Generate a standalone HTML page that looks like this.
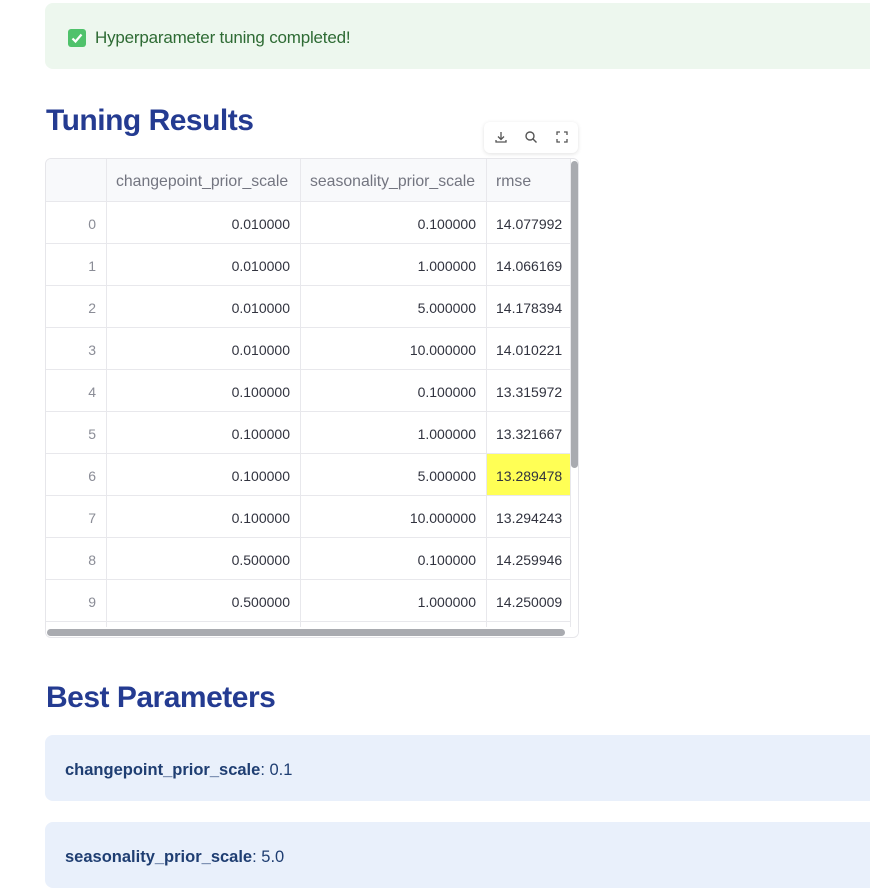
<!DOCTYPE html>
<html><head><meta charset="utf-8"><style>
*{box-sizing:border-box;margin:0;padding:0}
body{width:870px;height:884px;overflow:hidden;background:#fff;font-family:"Liberation Sans",sans-serif;position:relative}
.ok{position:absolute;left:45px;top:3px;width:840px;height:66px;background:#edf7ee;border-radius:8px}
.ok .chk{position:absolute;left:23px;top:26px;width:18px;height:18px;background:#4fc26b;border-radius:3px}
.ok span{position:absolute;left:50px;top:25px;font-size:17px;color:#2e6b34;letter-spacing:-0.2px}
h2{position:absolute;left:46px;font-size:30px;font-weight:bold;color:#243b91;letter-spacing:-0.5px}
.tb{position:absolute;left:484px;top:122px;width:94px;height:31px;background:#fff;border-radius:6px;box-shadow:0 1px 4px rgba(0,0,0,.12)}
.tb svg{position:absolute;top:8px}
.tbl{position:absolute;left:45px;top:158px;width:534px;height:480px;border:1px solid #e6e6ea;border-radius:6px;overflow:hidden}
.cell{position:absolute;height:42px;border-right:1px solid #e8e8ec;border-bottom:1px solid #e8e8ec;font-size:14px;color:#31333f;line-height:44px;padding:0 10px;text-align:right}
.hd{background:#f8f9fb;color:#737580;text-align:left;height:43px;line-height:45px;font-size:15.8px;padding-left:9px}
.ix{color:#8a8c96;text-align:right;padding-right:10px}
.info{position:absolute;left:45px;width:840px;height:66px;background:#e9f0fb;border-radius:8px;font-size:16.5px;color:#1f3e72}
.info span{position:absolute;left:20px;top:26px}
</style></head><body>
<div class="ok"><div class="chk"><svg width="18" height="18" viewBox="0 0 18 18"><path d="M4.5 9.5l3 3 6-7" stroke="#fff" stroke-width="2.2" fill="none"/></svg></div><span>Hyperparameter tuning completed!</span></div>
<h2 style="top:104px">Tuning Results</h2>
<div class="tb">
<svg style="left:10px" width="14" height="14" viewBox="0 0 14 14" fill="none" stroke="#555" stroke-width="1.3"><path d="M7 2v7M4 6.5l3 3 3-3M2 10v2h10v-2"/></svg>
<svg style="left:40px" width="14" height="14" viewBox="0 0 14 14" fill="none" stroke="#555" stroke-width="1.4"><circle cx="6" cy="6" r="4"/><path d="M9 9l3.5 3.5"/></svg>
<svg style="left:71px" width="14" height="14" viewBox="0 0 14 14" fill="none" stroke="#555" stroke-width="1.3"><path d="M2 5V2h3M9 2h3v3M12 9v3H9M5 12H2V9"/></svg>
</div>
<div class="tbl" id="t"></div>
<h2 style="top:681px">Best Parameters</h2>
<div class="info" style="top:735px"><span><b>changepoint_prior_scale</b>: 0.1</span></div>
<div class="info" style="top:822px"><span><b>seasonality_prior_scale</b>: 5.0</span></div>
<script>
var t=document.getElementById('t');
var xs=[0,61,255,441,525],h='';
var hd=['','changepoint_prior_scale','seasonality_prior_scale','rmse'];
for(var c=0;c<4;c++)h+='<div class="cell hd" style="left:'+xs[c]+'px;top:0;width:'+(xs[c+1]-xs[c])+'px">'+hd[c]+'</div>';
var d=[['0.010000','0.100000','14.077992'],['0.010000','1.000000','14.066169'],['0.010000','5.000000','14.178394'],['0.010000','10.000000','14.010221'],['0.100000','0.100000','13.315972'],['0.100000','1.000000','13.321667'],['0.100000','5.000000','13.289478'],['0.100000','10.000000','13.294243'],['0.500000','0.100000','14.259946'],['0.500000','1.000000','14.250009'],['','','']];
for(var r=0;r<d.length;r++){var y=43+r*42;var row=[r<10?r:''].concat(d[r]);
for(var c=0;c<4;c++){var st='left:'+xs[c]+'px;top:'+y+'px;width:'+(xs[c+1]-xs[c])+'px;';
if(r==6&&c==3)st+='background:#ffff55;';
if(c==3)st+='text-align:left;padding-left:9px;';
h+='<div class="cell'+(c==0?' ix':'')+'" style="'+st+'">'+row[c]+'</div>';}}
h+='<div style="position:absolute;left:525px;top:2px;width:7px;height:307px;background:#a9abb0;border-radius:4px"></div>';
h+='<div style="position:absolute;left:0;top:468px;width:532px;height:10px;background:#fff"></div>';
h+='<div style="position:absolute;left:1px;top:470px;width:518px;height:7px;background:#a9abb0;border-radius:4px"></div>';
t.innerHTML=h;
</script>
</body></html>
